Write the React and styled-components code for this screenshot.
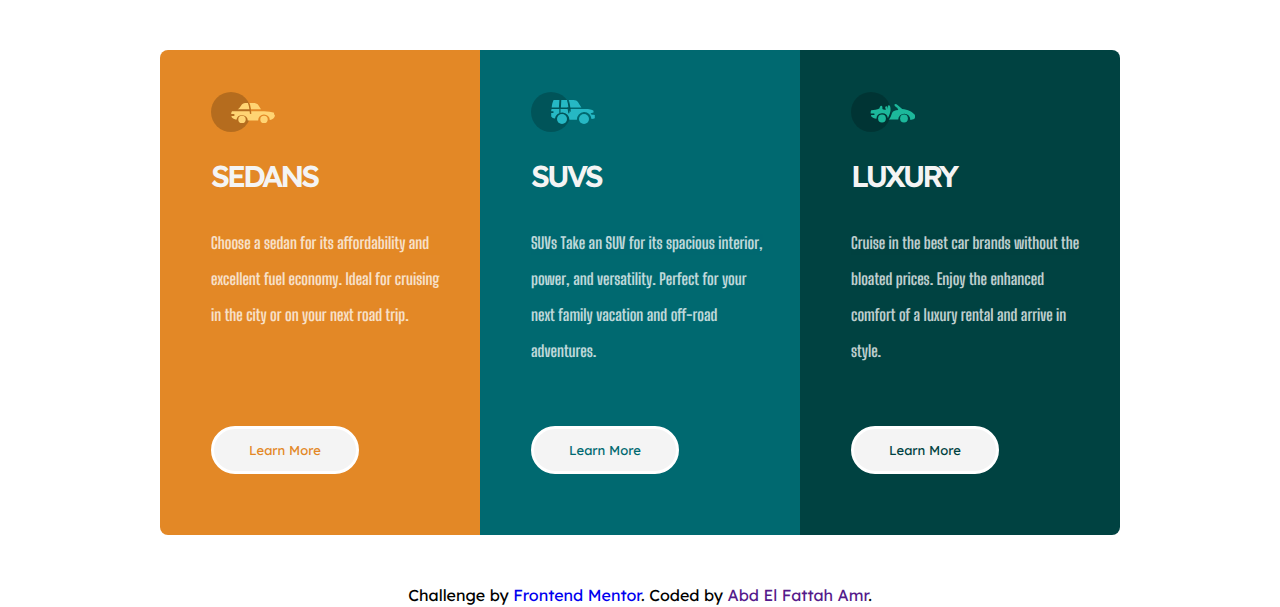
import React from "react";
import styled, { createGlobalStyle } from "styled-components";

const GlobalStyle = createGlobalStyle`
  * {
    box-sizing: border-box;
    margin: 0;
    padding: 0;
  }

  body {
    background: #ffffff;
    font-family: "Lexend Deca", Inter, sans-serif;
    font-size: 16px;
    text-rendering: geometricPrecision;
  }
`;

const Page = styled.div`
  display: flex;
  flex-direction: column;
  align-items: center;
  gap: 50px;
  padding-top: 50px;
`;

const Cards = styled.main`
  display: grid;
  grid-template-columns: repeat(3, 1fr);
  width: 75%;
  border-radius: 8px;
  overflow: hidden;

  @media (max-width: 900px) {
    grid-template-columns: 1fr;
  }
`;

const Card = styled.section`
  display: flex;
  flex-direction: column;
  align-items: flex-start;
  padding: 42px 36px 61px 51px;
  background: ${({ $color }) => $color};
`;

const Icon = styled.svg`
  display: block;
  width: 64px;
  height: 40px;
`;

const Title = styled.h2`
  margin-top: 24px;
  color: #f4f4f4;
  font-family: "Lexend Deca", Lato, sans-serif;
  font-size: 30px;
  font-weight: 600;
  line-height: 40px;
  letter-spacing: -3px;
  text-transform: uppercase;
`;

const Description = styled.p`
  flex: 1;
  margin: 30px 0 56px;
  color: #ffffff;
  opacity: 0.75;
  font-family: "Big Shoulders Display", "Liberation Sans Narrow", sans-serif;
  font-size: 16px;
  font-weight: 700;
  font-kerning: none;
  line-height: 36px;
`;

const LearnMore = styled.button`
  height: 48px;
  padding: 2px 35px 0;
  border: 3px solid #ffffff;
  border-radius: 24px;
  background: #f4f4f4;
  color: ${({ $color }) => $color};
  font-family: inherit;
  font-size: 13px;
  text-rendering: inherit;
  cursor: pointer;
`;

const Footer = styled.footer`
  line-height: 20px;
  text-align: center;
`;

const FooterLink = styled.a`
  color: ${({ $visited }) => ($visited ? "#551a8b" : "#0000ee")};
  text-decoration: none;
`;

const SedanIcon = () => (
  <Icon viewBox="0 0 64 40" aria-hidden="true">
    <circle cx="20" cy="20" r="20" fill="#000" opacity=".2" />
    <g fill="#ffd473">
      <path d="M26.6 17.2c1.4-.3 2.300-1.800 3.200-3.200 1.500-2.200 2.500-3 4.500-3h2.600c.8 1.800 1.200 4 1.500 6.200zM38.600 11h3.900c2.400 0 3.900.7 5.100 2.400 1 1.500 1.600 2.700 2.400 3.800H40c-.3-2.300-.7-4.300-1.400-6.200z" />
      <path d="M21 19.200h17.600c.2 1.200.3 1.800.3 2.500.5.200 1 .200 1.500.2 0-.9-.1-1.700-.2-2.700H53c4 .1 7.700.5 10.200 1.600l-.3 1.500c.7.200 1 .6 1 1.300-.3 2-1.400 3.800-5.100 4.500a5.800 5.800 0 0 0-11.600.3h-10.400a5.800 5.800 0 0 0-11.400-.7c-2-.4-3.800-1.300-4.900-2.600l.1-1.200h2.300c.8 0 .9-1.800 0-1.800H20.200c0-1.100.2-2.100.8-2.900z" />
      <circle cx="31" cy="27.400" r="3.700" />
      <circle cx="53" cy="27.400" r="3.700" />
    </g>
  </Icon>
);

const SuvIcon = () => (
  <Icon viewBox="0 0 64 40" aria-hidden="true">
    <circle cx="20" cy="20" r="20" fill="#000" opacity=".2" />
    <g fill="#26b8c4">
      <path d="M22.600 8h5.800l-.5 7.400h-7.200c.2-2.700.8-5.200 1.900-7.400zM30.300 8h5.600c.8 2.200 1.300 4.700 1.500 7.400h-7.500zM37.800 8h4.600c2.200 0 3.700.7 4.700 2.200 1 1.500 2 3.500 3.300 5.200H39.300c-.2-2.600-.7-5.100-1.500-7.400z" />
      <path d="M20.500 17.100H38c.1 1 .2 1.700.200 2.400l1.500.3c0-1 0-1.800-.1-2.700H54c4.200 0 7.400.6 8.500 1.700v1.700c-1 .4-2.800.5-2.800 1.300 0 .7 1.100 1 2.900 1l1.200.1v3.300c-.8.500-2 .800-3.300.9a7.300 7.300 0 0 0-14.600.6H38.400a7.300 7.300 0 0 0-14.500-1.100c-1.600-.2-2.900-1-3.700-2.100v-3.600h1.800c.8 0 .9-1.700 0-1.700h-1.800c0-.8.1-1.500.4-2.100z" />
      <circle cx="31" cy="27" r="5" />
      <circle cx="53" cy="27" r="5" />
    </g>
    <path d="M28.900 15v6M37 15.200c.5 2.300.4 4.200 1 6" fill="none" stroke="#005a60" strokeWidth="1.200" />
  </Icon>
);

const LuxuryIcon = () => (
  <Icon viewBox="0 0 64 40" aria-hidden="true">
    <circle cx="20" cy="20" r="20" fill="#000" opacity=".2" />
    <g fill="#1cb89b">
      <path d="M20.400 18.300c2.500-.4 5.500-.8 8-1.900.4-1.100.7-2.600 1.800-2.600 1.400 0 1.300 1.500 1.200 3 .6 1 2.200 1.100 3.600.7-.6-1.200-1.300-2.400-.3-3.100.9-.5 1.500-.2 1.800.6.300.7.300 1.300.3 2 .4-.9.300-2 0-3.200.7-.7 1.700-.7 2.200.1 1 2.600.8 5.600-.5 8.500l-1.600 3.800a5.800 5.800 0 0 0-11.500.5c-2-.2-3.900-1.200-5.300-2.500v-1.200h2.900c.8 0 .8-1.600 0-1.600h-3.300c-.2-1 0-2 .3-2.900z" />
      <path d="M43.300 13c.4-1.200 1.900-1.200 2.900-.3l5 4.200c5.500.3 10.500 3 12.400 5.600.9 1.500.7 3.300-.4 4.500-1.200.5-2.400.8-3.900.9a6 6 0 0 0-12.100-.4l-9.500.1c1.900-1.600 2.300-4 3.300-6.400.7-1.700 2-2.500 4.100-2.900l2.200-.2-1.100-2.400c-1.300-.6-2.400-1.600-2.900-2.700z" />
      <circle cx="31" cy="26.500" r="3.900" />
      <circle cx="53" cy="26.500" r="3.900" />
    </g>
  </Icon>
);

const cars = [
  {
    title: "Sedans",
    color: "#e38826",
    CarIcon: SedanIcon,
    text: "Choose a sedan for its affordability and excellent fuel economy. Ideal for cruising in the city or on your next road trip.",
  },
  {
    title: "SUVs",
    color: "#006970",
    CarIcon: SuvIcon,
    text: "SUVs Take an SUV for its spacious interior, power, and versatility. Perfect for your next family vacation and off-road adventures.",
  },
  {
    title: "Luxury",
    color: "#004241",
    CarIcon: LuxuryIcon,
    text: "Cruise in the best car brands without the bloated prices. Enjoy the enhanced comfort of a luxury rental and arrive in style.",
  },
];

export default function App() {
  return (
    <>
      <GlobalStyle />
      <Page>
        <Cards>
          {cars.map(({ title, color, CarIcon, text }) => (
            <Card key={title} $color={color}>
              <CarIcon />
              <Title>{title}</Title>
              <Description>{text}</Description>
              <LearnMore type="button" $color={color}>
                Learn More
              </LearnMore>
            </Card>
          ))}
        </Cards>
        <Footer>
          Challenge by <FooterLink href="#frontend-mentor">Frontend Mentor</FooterLink>. Coded by{" "}
          <FooterLink href="#author" $visited>
            Abd El Fattah Amr
          </FooterLink>
          .
        </Footer>
      </Page>
    </>
  );
}
